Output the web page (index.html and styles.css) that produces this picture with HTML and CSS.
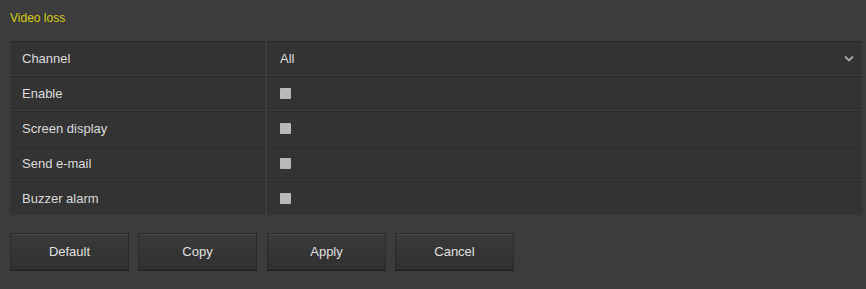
FILE: index.html
```html
<!DOCTYPE html>
<html lang="en">
<head>
    <meta charset="UTF-8">
    <title>Video loss</title>
    <link rel="stylesheet" href="styles.css">
</head>
<body>
    <div class="page">
        <div class="title">Video loss</div>
        <div class="table">
            <div class="row">
                <div class="label">Channel</div>
                <div class="value select">
                    <span>All</span>
                    <svg class="chev" width="10" height="7" viewBox="0 0 10 7"><path d="M1 1.5 L5 5.5 L9 1.5" fill="none" stroke="#aaa" stroke-width="1.8"/></svg>
                </div>
            </div>
            <div class="row">
                <div class="label">Enable</div>
                <div class="value"><span class="check"></span></div>
            </div>
            <div class="row">
                <div class="label">Screen display</div>
                <div class="value"><span class="check"></span></div>
            </div>
            <div class="row">
                <div class="label">Send e-mail</div>
                <div class="value"><span class="check"></span></div>
            </div>
            <div class="row">
                <div class="label">Buzzer alarm</div>
                <div class="value"><span class="check"></span></div>
            </div>
        </div>
        <div class="buttons">
            <button class="btn">Default</button>
            <button class="btn">Copy</button>
            <button class="btn">Apply</button>
            <button class="btn">Cancel</button>
        </div>
    </div>
</body>
</html>
```

FILE: styles.css
```css
html, body {
    margin: 0;
    background: #3c3c3c;
}
body {
    font-family: "Liberation Sans", Arial, sans-serif;
    font-size: 13px;
    color: #dcdcdc;
}
.page {
    padding: 11px 4px 0 10px;
    height: 278px;
}
.title {
    color: #d8cc10;
    font-size: 12px;
    height: 30px;
}
.table {
    display: flex;
    flex-direction: column;
    gap: 1px;
}
.row {
    display: grid;
    grid-template-columns: 255px 1fr;
    gap: 2px;
    height: 34px;
}
.label, .value {
    background: #333333;
    display: flex;
    align-items: center;
    box-shadow: inset 0 1px 0 #2b2b2b;
}
.label {
    padding-left: 12px;
}
.value {
    padding-left: 13px;
    padding-right: 8px;
}
.select {
    justify-content: space-between;
}
.check {
    width: 11px;
    height: 11px;
    background: #b9b9b9;
    border-radius: 1px;
}
.buttons {
    display: flex;
    gap: 9px;
    margin-top: 18px;
}
.btn {
    width: 119px;
    height: 37px;
    background: linear-gradient(#3a3a3a, #303030);
    border: 1px solid #2a2a2a;
    box-shadow: 0 1px 0 #202020, inset 0 1px 0 #4a4a4a;
    color: #e0e0e0;
    font-family: "Liberation Sans", Arial, sans-serif;
    font-size: 13px;
}
.btn:nth-child(3) {
    margin-left: 1px;
}
```
